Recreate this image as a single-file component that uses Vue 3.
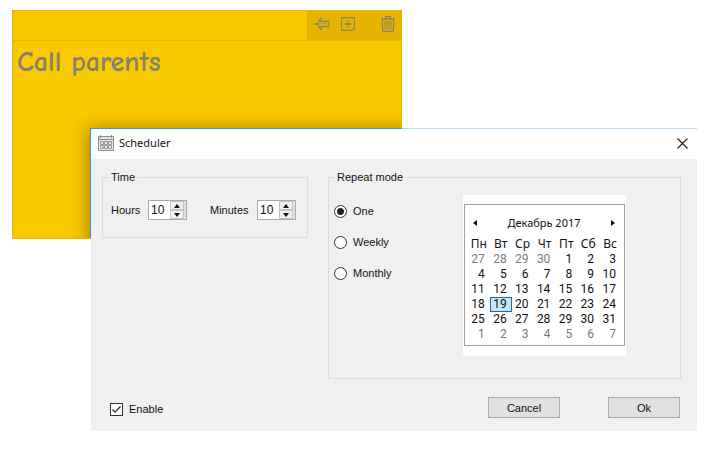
<script setup>
import { ref, computed } from 'vue'

const hours = ref(10)
const minutes = ref(10)
const mode = ref('One')
const enabled = ref(true)
const selected = ref(22)
const modes = ['One', 'Weekly', 'Monthly']
const weekdays = ['Пн', 'Вт', 'Ср', 'Чт', 'Пт', 'Сб', 'Вс']

// Six weeks starting on Monday, 27 November 2017
const weeks = computed(() =>
  Array.from({ length: 6 }, (_, w) =>
    Array.from({ length: 7 }, (_, d) => {
      const index = w * 7 + d
      const date = new Date(2017, 10, 27 + index)
      return { index, day: date.getDate(), other: date.getMonth() !== 11 }
    })
  )
)

function step(target, by, limit) {
  const next = target + by
  return next < 0 ? limit : next > limit ? 0 : next
}
</script>

<template>
  <main class="desktop">
    <section class="note">
      <header class="note-bar">
        <div class="note-tools">
          <button class="tool" aria-label="Pin">
            <svg width="16" height="14" viewBox="0 0 16 14" fill="none" stroke="#8f8758" stroke-width="1.3">
              <path d="M0 7H4M4.500 4.500V9.500L7 12.500V9.500H14.500V4.500H7V1.500L4.500 4.500" />
              <path d="M7 6.500H13" stroke-width="1.500" stroke-dasharray="1 1" />
            </svg>
          </button>
          <button class="tool" aria-label="Add note">
            <svg width="14" height="14" viewBox="0 0 14 14" fill="none" stroke="#8f8758" stroke-width="1.3">
              <path d="M.6.6H13.400V11.500L11.500 13.400H.6ZM7 3.500V10.500M3.500 7H10.500" />
            </svg>
          </button>
          <button class="tool last" aria-label="Delete">
            <svg width="14" height="16" viewBox="0 0 14 16" fill="none" stroke="#8f8758" stroke-width="1.3">
              <path d="M0 3H14M4.500 3V.6H9.500V3M1.500 3V13.500Q1.500 15.400 3 15.400H11Q12.500 15.400 12.500 13.500V3" />
              <path d="M4 5V13.500M6 5V13.500M8 5V13.500M10 5V13.500" stroke-width="1" />
            </svg>
          </button>
        </div>
      </header>
      <p class="note-text">Call parents</p>
      <div class="cast"></div>
    </section>

    <section class="dialog" role="dialog" aria-labelledby="dialog-title">
      <div class="edge"><span></span></div>
      <header class="title-bar">
        <svg width="16" height="16" viewBox="0 0 16 16" fill="none" stroke="#8c8c8c">
          <path fill="#e6e6e6" d="M.5 1.500H15.500V15.500H.5Z" />
          <path d="M1 4.500H15M2.500 0V3M13.500 0V3" />
          <path d="M2.500 6.500H5.500V9.500H2.500ZM6.500 6.500H9.500V9.500H6.500ZM10.500 6.500H13.500V9.500H10.500ZM2.500 10.500H5.500V13.500H2.500ZM6.500 10.500H9.500V13.500H6.500ZM10.500 10.500H13.500V13.500H10.500Z" stroke="#999" />
        </svg>
        <h1 id="dialog-title">Scheduler</h1>
        <button class="close" aria-label="Close">
          <svg width="11" height="11" viewBox="0 0 11 11" stroke="#222" stroke-width="1.200">
            <path d="M.5.5L10.500 10.500M10.500.5L.5 10.500" />
          </svg>
        </button>
      </header>

      <div class="body">
        <fieldset>
          <legend>Time</legend>
          <div class="time-row">
            <label for="hours">Hours</label>
            <div class="spinner">
              <input id="hours" v-model.number="hours" type="number" min="0" max="23" />
              <div class="steps">
                <button aria-label="More hours" @click="hours = step(hours, 1, 23)"><i class="up"></i></button>
                <button aria-label="Fewer hours" @click="hours = step(hours, -1, 23)"><i class="down"></i></button>
              </div>
            </div>
            <label for="minutes" class="second">Minutes</label>
            <div class="spinner">
              <input id="minutes" v-model.number="minutes" type="number" min="0" max="59" />
              <div class="steps">
                <button aria-label="More minutes" @click="minutes = step(minutes, 1, 59)"><i class="up"></i></button>
                <button aria-label="Fewer minutes" @click="minutes = step(minutes, -1, 59)"><i class="down"></i></button>
              </div>
            </div>
          </div>
        </fieldset>

        <fieldset>
          <legend>Repeat mode</legend>
          <div class="repeat">
            <div class="modes">
              <label v-for="m in modes" :key="m" class="choice">
                <input v-model="mode" type="radio" name="mode" :value="m" />
                {{ m }}
              </label>
            </div>
            <div class="calendar-pad">
              <div class="calendar">
                <div class="month">
                  <button aria-label="Previous month"><i class="left"></i></button>
                  <span>Декабрь 2017</span>
                  <button aria-label="Next month"><i class="right"></i></button>
                </div>
                <table>
                  <thead>
                    <tr><th v-for="d in weekdays" :key="d" scope="col">{{ d }}</th></tr>
                  </thead>
                  <tbody>
                    <tr v-for="(week, w) in weeks" :key="w">
                      <td
                        v-for="c in week"
                        :key="c.index"
                        :class="{ other: c.other, selected: c.index === selected }"
                        @click="selected = c.index"
                      >{{ c.day }}</td>
                    </tr>
                  </tbody>
                </table>
              </div>
            </div>
          </div>
        </fieldset>
      </div>

      <footer class="actions">
        <label class="choice enable">
          <span class="tick">
            <input v-model="enabled" type="checkbox" />
            <svg v-if="enabled" width="13" height="13" viewBox="0 0 13 13" fill="none" stroke="#222" stroke-width="1.200">
              <path d="M2.500 6.500L5 9.200L10.500 3.500" />
            </svg>
          </span>
          Enable
        </label>
        <button class="push">Cancel</button>
        <button class="push">Ok</button>
      </footer>
    </section>
  </main>
</template>

<style>
body {
  margin: 0;
  background: #fff;
}
</style>

<style scoped>
* {
  box-sizing: border-box;
}
button {
  padding: 0;
  border: 0;
  background: none;
  font: inherit;
  color: inherit;
}
svg {
  display: block;
}
.desktop {
  display: grid;
  align-items: start;
  padding: 10px 23px 26px 12px;
  font: 11px/16px "Liberation Sans", Arial, sans-serif;
  color: #111;
}
.note,
.dialog {
  grid-area: 1 / 1;
}
.note {
  position: relative;
  overflow: hidden;
  width: 390px;
  max-width: 100%;
  height: 229px;
  border: 1px solid #e3b800;
  background: #f9c900;
}
.note-bar {
  display: flex;
  justify-content: flex-end;
  height: 30px;
  border-bottom: 1px solid #e6b900;
}
.note-tools {
  display: flex;
  align-items: center;
  gap: 11px;
  width: 94px;
  padding: 0 6px 3px 7px;
  background: #e3b500;
}
.tool.last {
  margin-left: auto;
}
.note-text {
  margin: 0;
  padding: 3px 4px;
  font: bold 28px/36px "Comic Sans MS", "Comic Neue", "Noto Sans", sans-serif;
  color: #85816f;
}
/* Edge and shadow that the dialog casts on the note */
.cast {
  position: absolute;
  inset: 117px -40px -40px 77px;
  border: 1px solid #2f9bdc;
  box-shadow: 0 2px 16px 1px rgba(70, 50, 0, 0.5);
}
.dialog {
  position: relative;
  margin: 118px 0 0 79px;
  background: #f0f0f0;
}
.edge {
  height: 1px;
  background: #b9dcf3;
}
.edge span {
  display: block;
  width: 311px;
  height: 1px;
  background: #2f9bdc;
}
.title-bar {
  display: flex;
  align-items: center;
  gap: 5px;
  height: 30px;
  padding: 0 9px 2px 7px;
  background: #fff;
}
h1 {
  margin: 0;
  font: 11px/16px "Noto Sans", sans-serif;
}
.close {
  margin-left: auto;
}
.body {
  display: grid;
  grid-template-columns: 206px 1fr;
  align-items: start;
  gap: 20px;
  padding: 10px 16px 0 11px;
}
fieldset {
  min-width: 0;
  margin: 0;
  padding: 0;
  border: 1px solid #dcdcdc;
}
legend {
  margin-left: 6px;
  padding: 0 2px;
}
.time-row {
  display: flex;
  align-items: center;
  padding: 15px 8px 17px;
}
.time-row label {
  width: 37px;
}
.time-row .second {
  width: 47px;
  margin-left: 23px;
}
.spinner {
  display: flex;
  width: 39px;
  height: 20px;
  border: 1px solid #aaa;
  background: #fff;
}
.spinner input {
  width: 21px;
  padding: 0 0 0 2px;
  border: 0;
  outline: 0;
  background: none;
  font: 12px/16px "Liberation Sans", Arial, sans-serif;
  color: inherit;
  appearance: textfield;
}
.spinner input::-webkit-inner-spin-button {
  margin: 0;
  appearance: none;
}
.steps {
  display: grid;
  flex: 1;
  padding-right: 2px;
  background: #e1e1e1;
}
.steps button,
.month button {
  display: grid;
  place-items: center;
}
.steps button {
  border: 1px solid #c4c4c4;
  background: #f0f0f0;
}
i {
  border: 3px solid transparent;
}
.up {
  border-top-width: 0;
  border-bottom: 4px solid #111;
}
.down {
  border-bottom-width: 0;
  border-top: 4px solid #111;
}
.left {
  border-left-width: 0;
  border-right: 4px solid #111;
}
.right {
  border-right-width: 0;
  border-left: 4px solid #111;
}
.repeat {
  display: flex;
  justify-content: space-between;
  padding: 10px 54px 22px 5px;
}
.modes {
  display: grid;
  align-content: start;
  gap: 15px;
  padding-top: 8px;
}
.choice {
  display: flex;
  align-items: center;
  gap: 6px;
}
.choice input {
  display: block;
  width: 13px;
  height: 13px;
  margin: 0;
  appearance: none;
  border: 1px solid #333;
  background: #fff;
}
.choice input[type='radio'] {
  border-radius: 50%;
}
.choice input[type='radio']:checked {
  background: radial-gradient(circle, #222 3px, #fff 4px);
}
.calendar-pad {
  width: 163px;
  padding: 9px 1px 10px;
  background: #fff;
}
.calendar {
  padding: 8px 3px 3px 3px;
  border: 1px solid #a0a0a0;
  font: 12px/15px "Noto Sans", sans-serif;
}
.month {
  display: flex;
  justify-content: space-between;
  padding: 2px 6px 5px 5px;
  font-size: 11px;
}
table {
  width: 100%;
  table-layout: fixed;
  border-collapse: collapse;
}
th,
td {
  height: 15px;
  padding: 0;
}
th {
  height: 17px;
  font-weight: 400;
}
td {
  padding-right: 5px;
  font-family: Roboto, "Noto Sans", sans-serif;
  line-height: 15px;
  text-align: right;
}
.other {
  color: #7a7a7a;
}
.selected {
  outline: 1px solid #26679b;
  outline-offset: -1px;
  background: #c4e8fb;
}
.actions {
  display: flex;
  align-items: center;
  gap: 48px;
  padding: 18px 17px 13px 19px;
}
.enable {
  margin: 3px auto 0 0;
}
.tick {
  display: grid;
}
.tick > * {
  grid-area: 1 / 1;
}
.tick svg {
  pointer-events: none;
}
.push {
  width: 72px;
  height: 21px;
  border: 1px solid #adadad;
  background: #e1e1e1;
}
</style>
